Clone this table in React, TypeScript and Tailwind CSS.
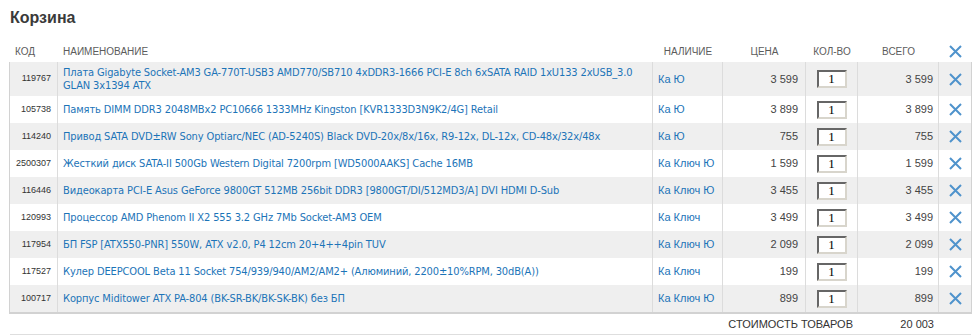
import React from "react";

type Row = { code: string; name: string[]; avail: string; price: string };

const rows: Row[] = [
  {
    code: "119767",
    name: [
      "Плата Gigabyte Socket-AM3 GA-770T-USB3 AMD770/SB710 4xDDR3-1666 PCI-E 8ch 6xSATA RAID 1xU133 2xUSB_3.0",
      "GLAN 3x1394 ATX",
    ],
    avail: "Ка Ю",
    price: "3 599",
  },
  { code: "105738", name: ["Память DIMM DDR3 2048MBx2 PC10666 1333MHz Kingston [KVR1333D3N9K2/4G] Retail"], avail: "Ка Ю", price: "3 899" },
  { code: "114240", name: ["Привод SATA DVD±RW Sony Optiarc/NEC (AD-5240S) Black DVD-20x/8x/16x, R9-12x, DL-12x, CD-48x/32x/48x"], avail: "Ка Ю", price: "755" },
  { code: "2500307", name: ["Жесткий диск SATA-II 500Gb Western Digital 7200rpm [WD5000AAKS] Cache 16MB"], avail: "Ка Ключ Ю", price: "1 599" },
  { code: "116446", name: ["Видеокарта PCI-E Asus GeForce 9800GT 512MB 256bit DDR3 [9800GT/DI/512MD3/A] DVI HDMI D-Sub"], avail: "Ка Ключ Ю", price: "3 455" },
  { code: "120993", name: ["Процессор AMD Phenom II X2 555 3.2 GHz 7Mb Socket-AM3 OEM"], avail: "Ка Ключ", price: "3 499" },
  { code: "117954", name: ["БП FSP [ATX550-PNR] 550W, ATX v2.0, P4 12cm 20+4++4pin TUV"], avail: "Ка Ключ Ю", price: "2 099" },
  { code: "117527", name: ["Кулер DEEPCOOL Beta 11 Socket 754/939/940/AM2/AM2+ (Алюминий, 2200±10%RPM, 30dB(A))"], avail: "Ка Ключ", price: "199" },
  { code: "100717", name: ["Корпус Miditower ATX PA-804 (BK-SR-BK/BK-SK-BK) без БП"], avail: "Ка Ключ Ю", price: "899" },
];

function XIcon() {
  return (
    <svg width="13" height="13" viewBox="0 0 13 13" className="block">
      <path d="M1 1 L12 12 M12 1 L1 12" stroke="#4f93cc" strokeWidth="2" strokeLinecap="butt" fill="none" />
    </svg>
  );
}

const cols = "grid grid-cols-[48px_595px_70px_83px_52px_81px_32px]";

export default function App() {
  return (
    <div className="w-[977px] h-[336px] bg-white pt-[8px] font-['Liberation_Sans',Arial,sans-serif] overflow-hidden">
      <h1 className="pl-[10px] text-[16px] leading-[20px] font-bold text-[#3a3a3a] mb-[13px]">Корзина</h1>

      <div className="ml-[9px] w-[963px] border-l border-r border-transparent">
        <div className={`${cols} h-[21px] items-center text-[10px] leading-[12px] text-[#5c5c5c]`}>
          <div className="pl-[5px]">КОД</div>
          <div className="pl-[5px]">НАИМЕНОВАНИЕ</div>
          <div className="text-center">НАЛИЧИЕ</div>
          <div className="text-center">ЦЕНА</div>
          <div className="text-center">КОЛ-ВО</div>
          <div className="text-center">ВСЕГО</div>
          <div className="flex justify-center">
            <XIcon />
          </div>
        </div>
      </div>

      <div className="ml-[9px] w-[963px] border-l border-r border-b-2 border-[#d2d2d2]">
        {rows.map((r, i) => (
          <div
            key={r.code}
            className={`${cols} min-h-[27px] ${i % 2 === 0 ? "bg-[#efefef]" : "bg-white"}`}
          >
            <div className="flex items-center justify-end pr-[6px] border-r border-[#dcdcdc] text-[9px] text-[#333]">
              {r.code}
            </div>
            <div className="flex flex-col justify-center py-[4px] pl-[5px] border-r border-[#dcdcdc] font-['DejaVu_Sans_Condensed','Liberation_Sans',sans-serif] text-[11px] tracking-[-0.13px] leading-[13px] text-[#1c74b8] whitespace-nowrap">
              {r.name.map((l) => (
                <span key={l}>{l}</span>
              ))}
            </div>
            <div className="flex items-center pl-[5px] border-r border-[#dcdcdc] text-[11px] text-[#1c74b8] whitespace-nowrap">
              {r.avail}
            </div>
            <div className="flex items-center justify-end pr-[7px] border-r border-[#dcdcdc] text-[11px] text-[#444]">
              {r.price}
            </div>
            <div className="flex items-center justify-center border-r border-[#dcdcdc]">
              <input
                readOnly
                value="1"
                className="w-[30px] h-[18px] bg-white border-2 border-t-[#666] border-l-[#666] border-b-[#d8d5cc] border-r-[#d8d5cc] text-center text-[13px] leading-[14px] text-black font-['Liberation_Serif',serif] p-0 outline-none"
              />
            </div>
            <div className="flex items-center justify-end pr-[5px] border-r border-[#dcdcdc] text-[11px] text-[#444]">
              {r.price}
            </div>
            <div className="flex items-center justify-center">
              <XIcon />
            </div>
          </div>
        ))}
      </div>

      <div className="ml-[9px] w-[963px] border-l border-r border-transparent">
        <div className={`${cols} h-[21px] items-center border-b border-[#dedede] text-[11px] text-[#333]`}>
          <div className="col-span-5 text-right pr-[5px]">СТОИМОСТЬ ТОВАРОВ</div>
          <div className="text-right pr-[5px]">20 003</div>
          <div />
        </div>
      </div>
    </div>
  );
}
